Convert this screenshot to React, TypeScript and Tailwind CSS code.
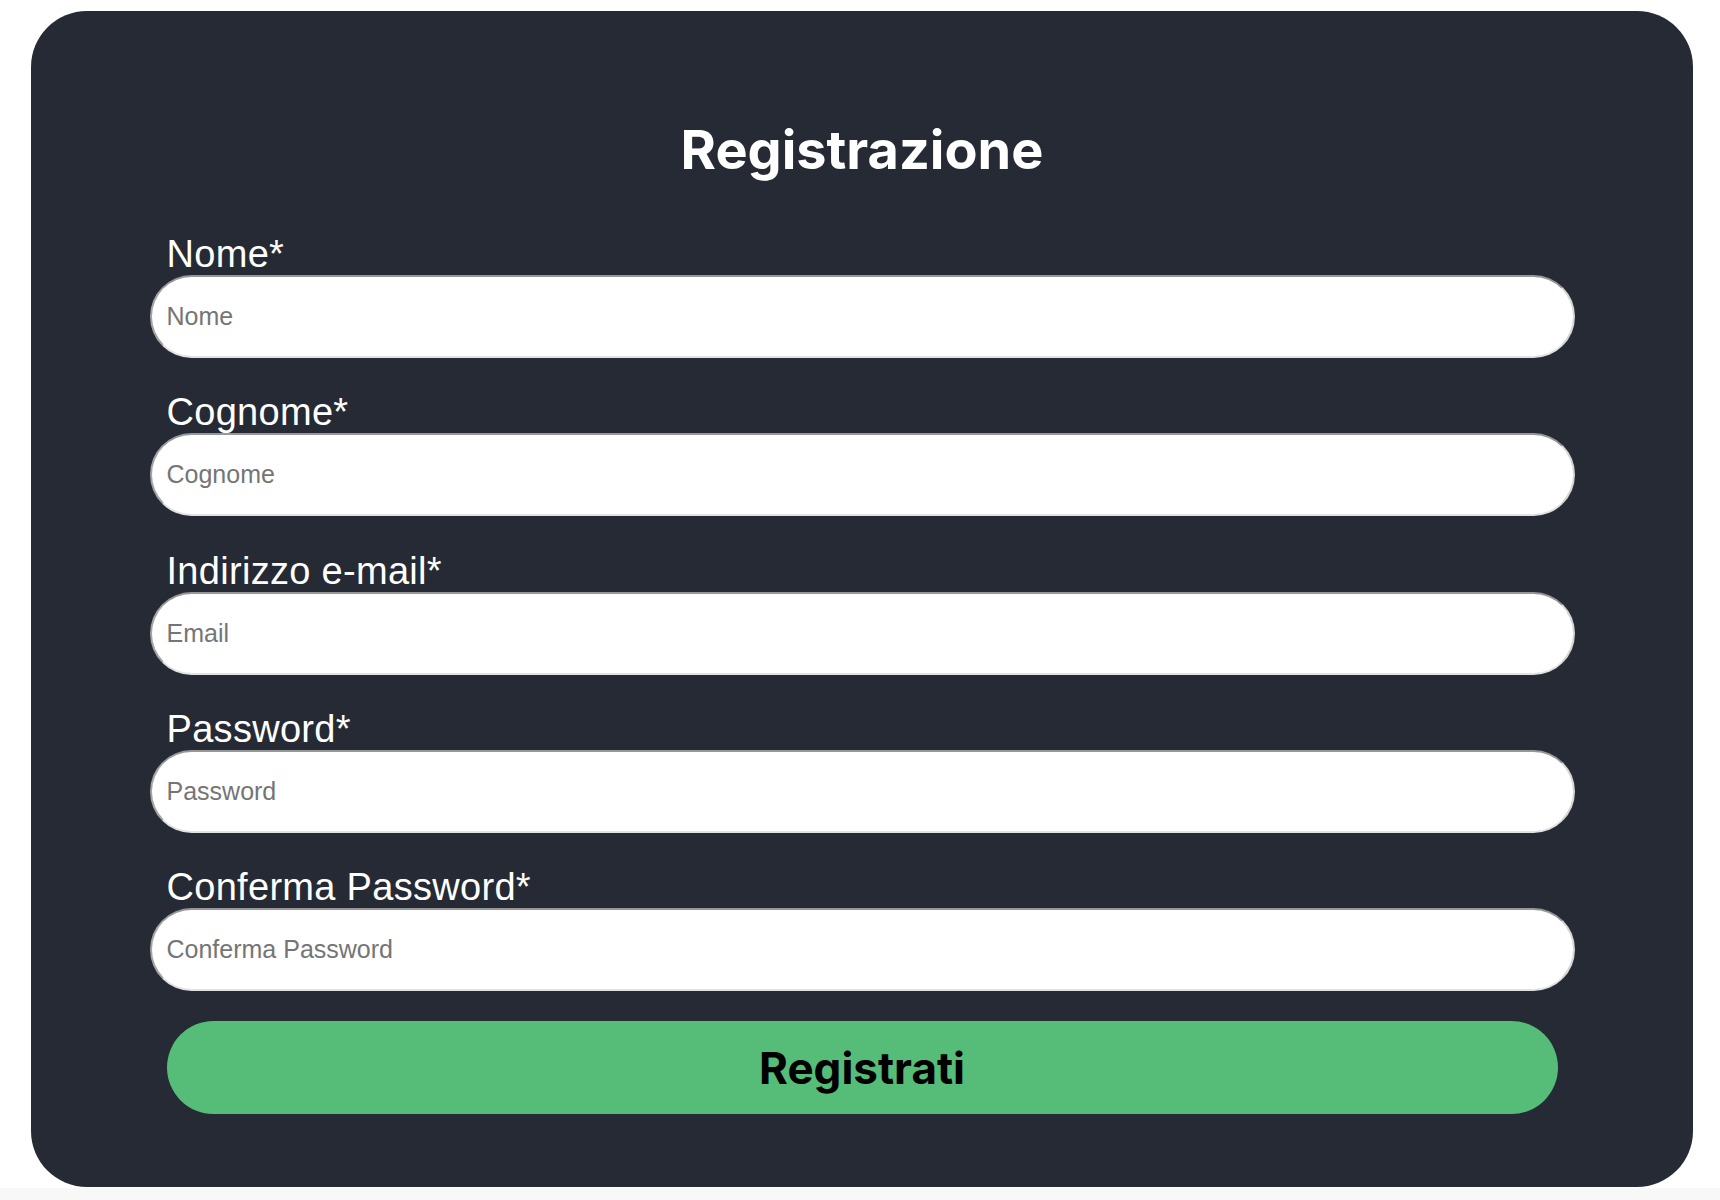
import React from 'react';

const fields = [
  { label: 'Nome*', placeholder: 'Nome', type: 'text' },
  { label: 'Cognome*', placeholder: 'Cognome', type: 'text' },
  { label: 'Indirizzo e-mail*', placeholder: 'Email', type: 'email' },
  { label: 'Password*', placeholder: 'Password', type: 'password' },
  { label: 'Conferma Password*', placeholder: 'Conferma Password', type: 'password' },
];

const App: React.FC = () => {
  return (
    <div className="min-h-[1200px] bg-white flex flex-col pt-[11px]">
      <div className="ml-[31px] w-[1662px] h-[1176px] rounded-[56px] bg-[#252a35] pt-[107px] flex flex-col items-center">
        <h1 className="font-['Inter',sans-serif] font-bold text-white text-[54px] leading-[64px]">
          Registrazione
        </h1>

        <form className="w-[1425px] mt-[52px] flex flex-col" onSubmit={(e) => e.preventDefault()}>
          {fields.map((f, i) => (
            <div key={f.label} className={i === 0 ? 'flex flex-col' : 'flex flex-col mt-[34.25px]'}>
              <label className="pl-[17px] font-['Liberation_Sans',Arial,sans-serif] text-white text-[38px] leading-[41px] tracking-[0.3px]">
                {f.label}
              </label>
              <input
                type={f.type}
                placeholder={f.placeholder}
                className="h-[83px] w-full rounded-full bg-white border-2 border-t-[#979797] border-l-[#a4a4a4] border-b-[#e2e2e2] border-r-[#d6d6d6] pl-[15px] font-['Liberation_Sans',Arial,sans-serif] text-[25px] text-black placeholder:text-[#757575] outline-none"
              />
            </div>
          ))}

          <button
            type="submit"
            className="mx-[17px] mt-[30px] h-[93px] rounded-full bg-[#56bd79] font-['Inter',sans-serif] font-bold text-black text-[44px] flex items-center justify-center"
          >
            Registrati
          </button>
        </form>
      </div>
      <div className="flex-1 mt-[1px] bg-[#f8f8f8]" />
    </div>
  );
};

export default App;
